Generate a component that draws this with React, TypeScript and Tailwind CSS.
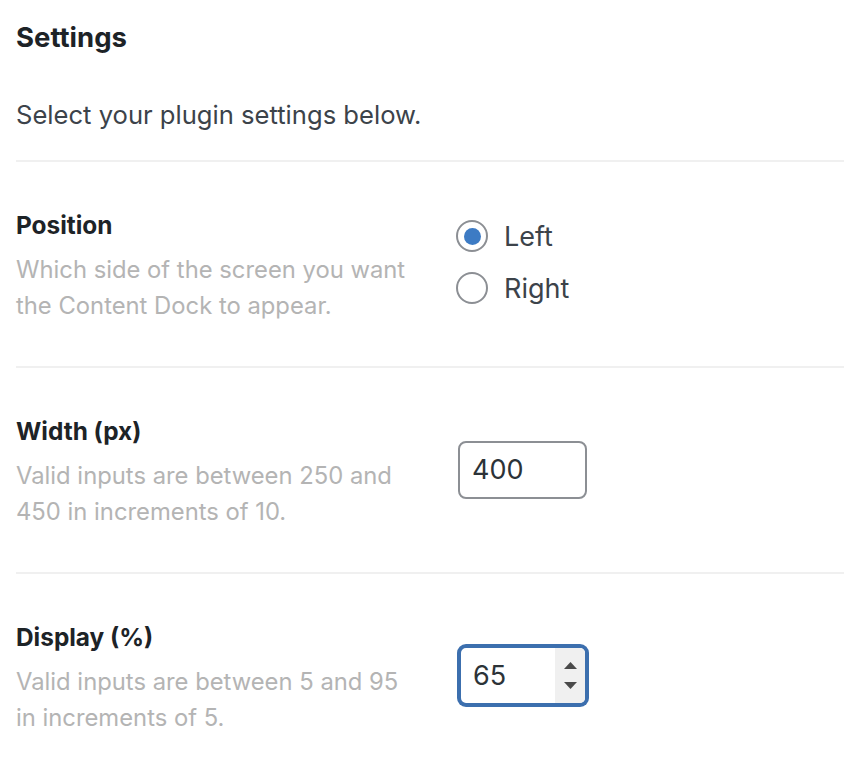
import React from "react";

function Radio({ checked, label }: { checked?: boolean; label: string }) {
  return (
    <label className="flex h-[52px] items-center gap-[16px]">
      <span className="flex h-[32px] w-[32px] items-center justify-center rounded-full border-2 border-[#8c8f94] bg-white">
        {checked && <span className="h-[17px] w-[17px] rounded-full bg-[#3d7bc4]" />}
      </span>
      <span className="text-[27px] leading-none text-[#3c434a]">{label}</span>
    </label>
  );
}

function Row({
  label,
  desc,
  children,
  rightOffset,
}: {
  label: string;
  desc: React.ReactNode;
  children: React.ReactNode;
  rightOffset: string;
}) {
  return (
    <div className="flex border-t-2 border-[#f0f0f0] pt-[45px] pb-[42px]">
      <div className="w-[440px] shrink-0">
        <div className="text-[24.4px] font-bold leading-[36px] text-[#1d2327]">{label}</div>
        <div className="mt-[9px] text-[23.8px] leading-[36px] text-[#b4b4b4]">{desc}</div>
      </div>
      <div className={rightOffset}>{children}</div>
    </div>
  );
}

export default function App() {
  return (
    <div className="min-h-[776px] bg-white pl-4 font-['Inter','Liberation_Sans',sans-serif] antialiased">
      <div className="pt-[19px] text-[27.5px] font-bold leading-[36px] text-[#1d2327]">Settings</div>
      <p className="mt-[42px] pb-[27px] text-[25.6px] leading-[36px] text-[#3c434a]">
        Select your plugin settings below.
      </p>
      <Row
        label="Position"
        desc={
          <>
            Which side of the screen you want
            <br />
            the Content Dock to appear.
          </>
        }
        rightOffset="mt-[3px]"
      >
        <Radio checked label="Left" />
        <Radio label="Right" />
      </Row>
      <Row
        label="Width (px)"
        desc={
          <>
            Valid inputs are between 250 and
            <br />
            450 in increments of 10.
          </>
        }
        rightOffset="mt-[28px] ml-[2px]"
      >
        <div className="flex h-[58px] w-[129px] items-center rounded-[8px] border-2 border-[#8c8f94] bg-white pl-[12px] text-[27px] text-[#2c3338]">
          400
        </div>
      </Row>
      <Row
        label="Display (%)"
        desc={
          <>
            Valid inputs are between 5 and 95
            <br />
            in increments of 5.
          </>
        }
        rightOffset="mt-[27px] ml-[3px]"
      >
        <div className="flex h-[59px] w-[128px] items-stretch overflow-hidden rounded-[7px] border-2 border-[#3c6fae] bg-white shadow-[0_0_0_2px_#3c6fae] text-[27px] text-[#2c3338]">
          <div className="flex flex-1 items-center pl-[12px] pt-[2px]">65</div>
          <div className="flex w-[30px] flex-col items-center justify-center gap-[13px] bg-[#f0f0f0]">
            <svg width="13" height="7" viewBox="0 0 13 7">
              <polygon points="6.5,0 13,7 0,7" fill="#4a4a4a" />
            </svg>
            <svg width="13" height="7" viewBox="0 0 13 7">
              <polygon points="0,0 13,0 6.5,7" fill="#4a4a4a" />
            </svg>
          </div>
        </div>
      </Row>
    </div>
  );
}
